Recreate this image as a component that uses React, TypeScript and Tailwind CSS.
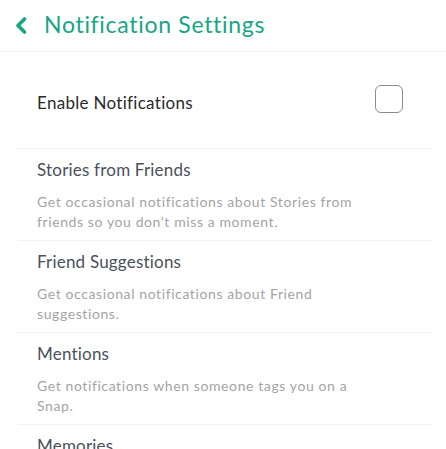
import React from "react";

const sections = [
  {
    title: "Stories from Friends",
    desc: "Get occasional notifications about Stories from friends so you don't miss a moment.",
  },
  {
    title: "Friend Suggestions",
    desc: "Get occasional notifications about Friend suggestions.",
  },
  {
    title: "Mentions",
    desc: "Get notifications when someone tags you on a Snap.",
  },
  {
    title: "Memories",
    desc: "Get notifications about your Memories.",
  },
];

export default function App() {
  return (
    <div
      className="w-[446px] h-[449px] overflow-hidden bg-white"
      style={{ fontFamily: "Lato, 'Open Sans', sans-serif" }}
    >
      <div className="h-[52px] flex items-center border-b border-[#f2f2f2]">
        <svg width="12" height="17" viewBox="0 0 12 17" className="ml-[15px]">
          <polyline
            points="9.5,2 3,8.5 9.5,15"
            fill="none"
            stroke="#17a584"
            strokeWidth="3.6"
            strokeLinecap="round"
            strokeLinejoin="round"
          />
        </svg>
        <span className="ml-[17px] text-[23px] leading-none text-[#17a584] tracking-[0.7px] pb-[2px]">
          Notification Settings
        </span>
      </div>
      <div className="h-[96px] flex items-center justify-between pl-[37px] pr-[43px]">
        <span className="text-[17px] leading-[24px] text-[#2b2b2b] pt-[5px] tracking-[0.3px]">Enable Notifications</span>
        <div className="w-[28px] h-[28px] rounded-[6px] border-[1.5px] border-[#8c8c8c] mb-[2px]" />
      </div>
      <div className="ml-[18px] mr-[14px]">
        {sections.map((s) => (
          <div key={s.title} className="border-t border-[#f2f2f2] pt-[9px] pb-[8px] pl-[19px]">
            <div className="text-[17px] leading-[24px] text-[#4b505a] tracking-[0.2px]">{s.title}</div>
            <div className="mt-[10px] text-[14px] leading-[20px] text-[#a4a4a4] max-w-[345px] tracking-[0.6px]">
              {s.desc}
            </div>
          </div>
        ))}
      </div>
    </div>
  );
}
